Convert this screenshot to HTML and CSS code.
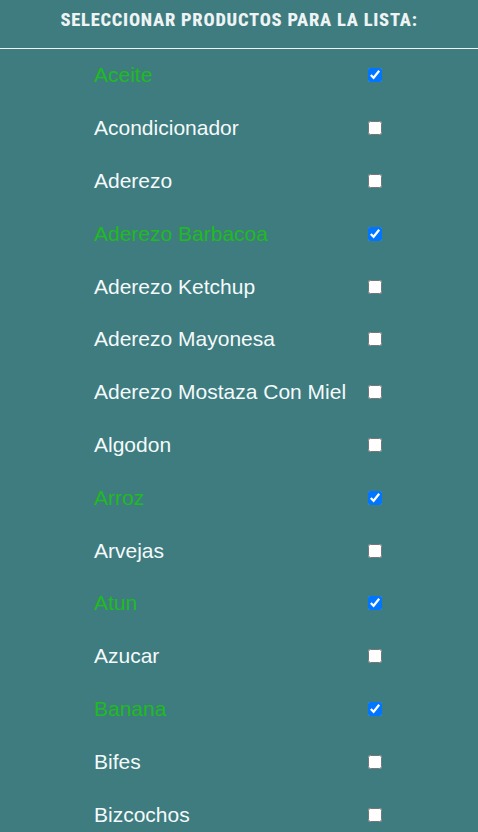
FILE: index.html
```html
<!DOCTYPE html>
<html lang="es">
<head>
<meta charset="utf-8">
<title>Lista</title>
<link rel="stylesheet" href="styles.css">
</head>
<body>
<header class="header"><h1 class="title">SELECCIONAR PRODUCTOS PARA LA LISTA:</h1></header>
<ul class="list">
  <li class="row checked"><span class="name">Aceite</span><input type="checkbox" checked></li>
  <li class="row"><span class="name">Acondicionador</span><input type="checkbox"></li>
  <li class="row"><span class="name">Aderezo</span><input type="checkbox"></li>
  <li class="row checked"><span class="name">Aderezo Barbacoa</span><input type="checkbox" checked></li>
  <li class="row"><span class="name">Aderezo Ketchup</span><input type="checkbox"></li>
  <li class="row"><span class="name">Aderezo Mayonesa</span><input type="checkbox"></li>
  <li class="row"><span class="name">Aderezo Mostaza Con Miel</span><input type="checkbox"></li>
  <li class="row"><span class="name">Algodon</span><input type="checkbox"></li>
  <li class="row checked"><span class="name">Arroz</span><input type="checkbox" checked></li>
  <li class="row"><span class="name">Arvejas</span><input type="checkbox"></li>
  <li class="row checked"><span class="name">Atun</span><input type="checkbox" checked></li>
  <li class="row"><span class="name">Azucar</span><input type="checkbox"></li>
  <li class="row checked"><span class="name">Banana</span><input type="checkbox" checked></li>
  <li class="row"><span class="name">Bifes</span><input type="checkbox"></li>
  <li class="row"><span class="name">Bizcochos</span><input type="checkbox"></li>
</ul>
</body>
</html>
```
FILE: styles.css
```css
html, body {
  margin: 0;
  padding: 0;
  background: #3e7c80;
}
body {
  font-family: "Liberation Sans", Arial, sans-serif;
  color: #ffffff;
}
.header {
  height: 48px;
  border-bottom: 1px solid #f2f2f2;
  display: flex;
  align-items: center;
  justify-content: center;
}
.title {
  margin: 0;
  font-family: "Liberation Sans Narrow", "Roboto Condensed", "Liberation Sans", sans-serif;
  font-weight: 800;
  font-size: 18.5px;
  color: #eef4f4;
  letter-spacing: 0.75px;
  padding-bottom: 8px;
  white-space: nowrap;
}
.list {
  list-style: none;
  margin: 0 0 0 94px;
  padding: 0;
  width: 288px;
}
.row {
  height: 52.8px;
  display: flex;
  align-items: center;
  justify-content: space-between;
}
.name {
  font-size: 21px;
  color: #f4fafa;
}
.row.checked .name {
  color: #1fbb1f;
}
.row input {
  width: 14px;
  height: 14px;
  margin: 0;
}
```
